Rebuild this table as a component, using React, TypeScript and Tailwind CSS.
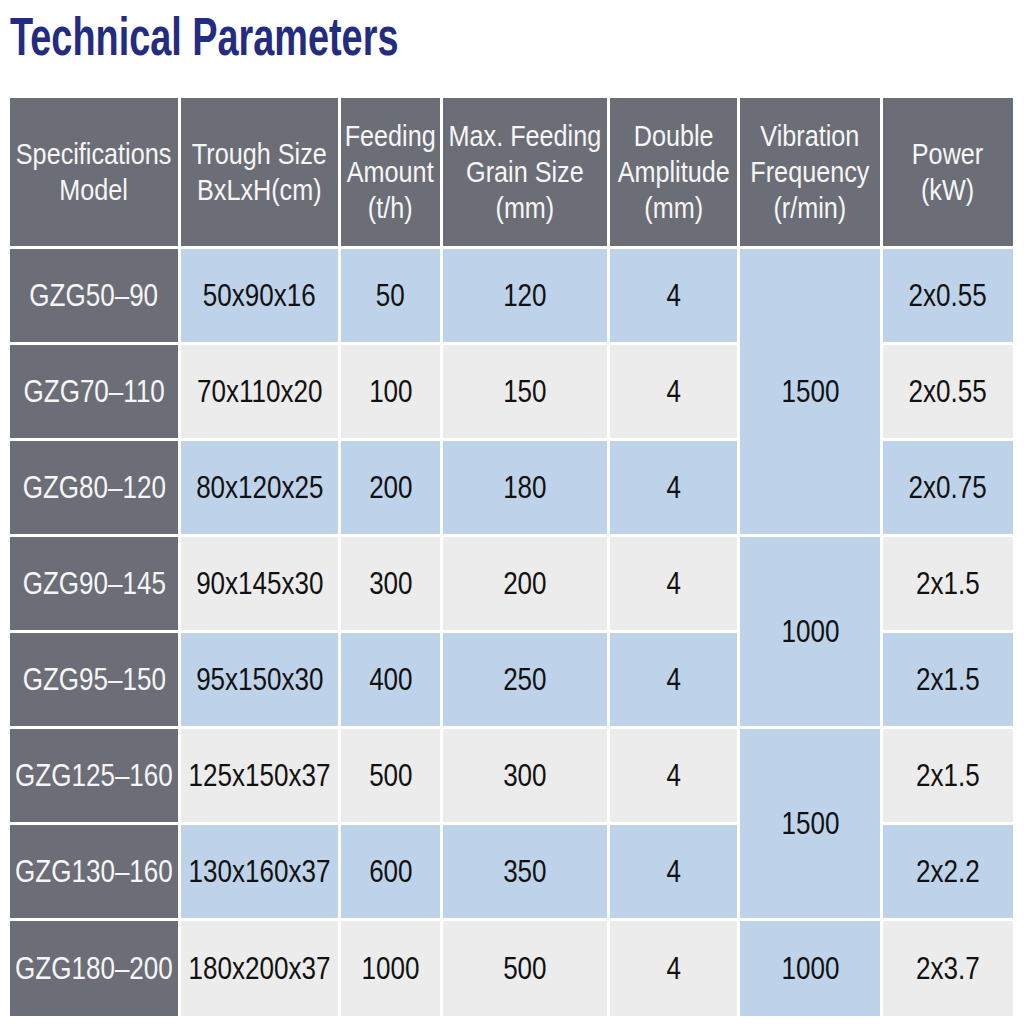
const HEAD_BG = "bg-[#6c6e77]";

type Row = {
  model: string;
  trough: string;
  feeding: string;
  grain: string;
  amplitude: string;
  power: string;
};

const ROWS: Row[] = [
  { model: "GZG50–90", trough: "50x90x16", feeding: "50", grain: "120", amplitude: "4", power: "2x0.55" },
  { model: "GZG70–110", trough: "70x110x20", feeding: "100", grain: "150", amplitude: "4", power: "2x0.55" },
  { model: "GZG80–120", trough: "80x120x25", feeding: "200", grain: "180", amplitude: "4", power: "2x0.75" },
  { model: "GZG90–145", trough: "90x145x30", feeding: "300", grain: "200", amplitude: "4", power: "2x1.5" },
  { model: "GZG95–150", trough: "95x150x30", feeding: "400", grain: "250", amplitude: "4", power: "2x1.5" },
  { model: "GZG125–160", trough: "125x150x37", feeding: "500", grain: "300", amplitude: "4", power: "2x1.5" },
  { model: "GZG130–160", trough: "130x160x37", feeding: "600", grain: "350", amplitude: "4", power: "2x2.2" },
  { model: "GZG180–200", trough: "180x200x37", feeding: "1000", grain: "500", amplitude: "4", power: "2x3.7" },
];

// merged vibration frequency cells: [value, first row, span]
const FREQUENCY: [string, number, number][] = [
  ["1500", 0, 3],
  ["1000", 3, 2],
  ["1500", 5, 2],
  ["1000", 7, 1],
];

const HEADERS = [
  ["Specifications", "Model"],
  ["Trough Size", "BxLxH(cm)"],
  ["Feeding", "Amount", "(t/h)"],
  ["Max. Feeding", "Grain Size", "(mm)"],
  ["Double", "Amplitude", "(mm)"],
  ["Vibration", "Frequency", "(r/min)"],
  ["Power", "(kW)"],
];

const ROW_START = ["row-start-2", "row-start-3", "row-start-4", "row-start-5", "row-start-6", "row-start-7", "row-start-8", "row-start-9"];
const ROW_SPAN = ["", "row-span-1", "row-span-2", "row-span-3"];

function Cell({ text, className }: { text: string; className: string }) {
  return (
    <div className={`flex items-center justify-center ${className}`}>
      <span className="inline-block whitespace-nowrap text-[31px] leading-none scale-x-[0.84]">{text}</span>
    </div>
  );
}

export default function App() {
  return (
    <div className="min-h-[1024px] bg-white pl-[10px] pt-[10px] font-['Liberation_Sans',Arial,sans-serif]">
      <h1 className="origin-left scale-x-[0.714] whitespace-nowrap text-[53px] font-bold leading-none text-[#232c7f]">
        Technical Parameters
      </h1>
      <div className="mt-[35px] grid w-[1003px] grid-cols-[168px_157px_99px_164px_127px_140px_130px] grid-rows-[148px_repeat(7,93px)_95px] gap-[3px]">
        {HEADERS.map((lines, i) => (
          <div key={i} className={`flex items-center justify-center ${HEAD_BG} text-[#f6f6f6]`}>
            <span className="inline-block whitespace-nowrap text-center text-[30px] leading-[36px] scale-x-[0.84]">
              {lines.map((line) => (
                <span key={line} className="block">
                  {line}
                </span>
              ))}
            </span>
          </div>
        ))}
        {ROWS.map((row, i) => {
          const bg = i % 2 === 0 ? "bg-[#bed3ea]" : "bg-[#ececec]";
          const pos = ROW_START[i];
          return [
            <Cell key={`m${i}`} text={row.model} className={`${pos} col-start-1 ${HEAD_BG} text-[#f6f6f6]`} />,
            <Cell key={`t${i}`} text={row.trough} className={`${pos} col-start-2 ${bg} text-[#111]`} />,
            <Cell key={`f${i}`} text={row.feeding} className={`${pos} col-start-3 ${bg} text-[#111]`} />,
            <Cell key={`g${i}`} text={row.grain} className={`${pos} col-start-4 ${bg} text-[#111]`} />,
            <Cell key={`a${i}`} text={row.amplitude} className={`${pos} col-start-5 ${bg} text-[#111]`} />,
            <Cell key={`p${i}`} text={row.power} className={`${pos} col-start-7 ${bg} text-[#111]`} />,
          ];
        })}
        {FREQUENCY.map(([value, start, span]) => (
          <Cell
            key={`v${start}`}
            text={value}
            className={`${ROW_START[start]} ${ROW_SPAN[span]} col-start-6 bg-[#bed3ea] text-[#111]`}
          />
        ))}
      </div>
    </div>
  );
}
